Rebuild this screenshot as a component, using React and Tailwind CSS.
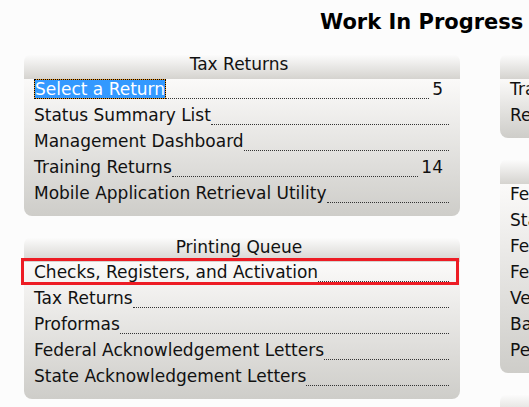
import React from 'react';

const taxReturns = [
  { label: 'Select a Return', count: '5', selected: true },
  { label: 'Status Summary List' },
  { label: 'Management Dashboard' },
  { label: 'Training Returns', count: '14' },
  { label: 'Mobile Application Retrieval Utility' },
];

const printingQueue = [
  { label: 'Checks, Registers, and Activation', marked: true },
  { label: 'Tax Returns' },
  { label: 'Proformas' },
  { label: 'Federal Acknowledgement Letters' },
  { label: 'State Acknowledgement Letters' },
];

const transmissions = [
  { label: 'Transmission Status' },
  { label: 'Rejected Returns' },
];

const reports = [
  { label: 'Federal Rejects' },
  { label: 'State Rejects' },
  { label: 'Federal Alerts' },
  { label: 'Federal Acks' },
  { label: 'Verification' },
  { label: 'Bank Products' },
  { label: 'Pending Returns' },
];

const Row = ({ label, count, selected, marked }) => (
  <div className="relative h-[26px] pl-[10px] pr-[11px]">
    {/* annotation box drawn over the row */}
    {marked && (
      <div className="pointer-events-none absolute -left-[3px] right-[1px] -top-[4px] bottom-[3px] border-[3px] border-[#ed1c24]" />
    )}
    <div className="flex items-end">
      {selected ? (
        <span className="shrink-0 whitespace-nowrap border border-dotted border-black bg-[#f29a1f]">
          <span className="block bg-[#3399ff] leading-[18px] text-white">{label}</span>
        </span>
      ) : (
        <span className="shrink-0 whitespace-nowrap leading-[20px]">{label}</span>
      )}
      <span className="flex-1 border-b border-dotted border-[#333]" />
      {count && <span className="ml-[3px] mr-[6px] leading-[20px]">{count}</span>}
    </div>
  </div>
);

const Panel = ({ title, rows }) => (
  <section className="w-[436px] shrink-0">
    <div className="h-[25px] rounded-t-[8px] bg-linear-to-b from-[#fdfdfd] to-[#d5d3cf] pr-[6px] text-center leading-[20px] whitespace-nowrap">
      {title}
    </div>
    <div className="rounded-b-[8px] bg-linear-to-b from-[#fbfaf9] to-[#cecdc9] pb-[7px]">
      {rows.map((r) => (
        <Row key={r.label} {...r} />
      ))}
    </div>
  </section>
);

export default function App() {
  return (
    <div className="h-[407px] w-full overflow-hidden bg-[#fcfcfc] font-['DejaVu_Sans',sans-serif] text-[17px] text-[#111]">
      <h1 className="whitespace-nowrap pl-[320px] pt-[10px] text-[21px] font-bold leading-[24px] text-black">
        Work In Progress
      </h1>
      <div className="mt-[20px] flex gap-[40px] pl-[24px]">
        <div className="flex shrink-0 flex-col gap-[21px]">
          <Panel title="Tax Returns" rows={taxReturns} />
          <Panel title="Printing Queue" rows={printingQueue} />
        </div>
        <div className="flex shrink-0 flex-col gap-[21px]">
          <Panel title="Transmissions" rows={transmissions} />
          <Panel title="Reports" rows={reports} />
          <Panel title="Utilities" rows={[{ label: 'Utilities' }]} />
        </div>
      </div>
    </div>
  );
}
